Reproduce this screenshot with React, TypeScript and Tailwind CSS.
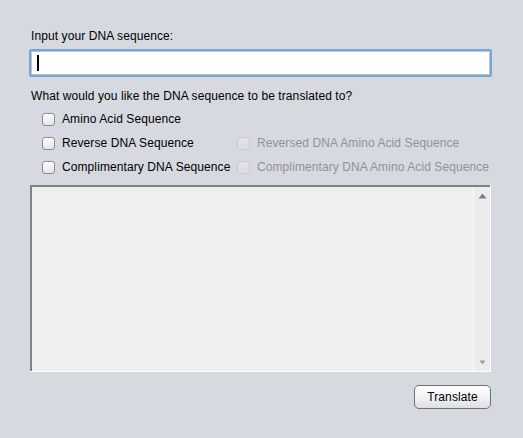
function Box({ disabled }: { disabled?: boolean }) {
  return (
    <span
      className={[
        "inline-block h-[13px] w-[13px] shrink-0 rounded-[3px] border",
        disabled
          ? "border-[#c9cbd0] bg-[linear-gradient(180deg,#e2e4e8_0%,#d9dce1_100%)]"
          : "border-[#8a8d93] bg-[linear-gradient(180deg,#fbfbfc_0%,#e4e6ea_100%)] shadow-[inset_0_1px_0_#ffffff]",
      ].join(" ")}
    />
  );
}

function Check({ label, disabled, className }: { label: string; disabled?: boolean; className?: string }) {
  return (
    <label className={["flex h-[24px] items-center gap-[7px]", className ?? ""].join(" ")}>
      <Box disabled={disabled} />
      <span className={disabled ? "text-[#8f939a]" : "text-black"}>{label}</span>
    </label>
  );
}

export default function App() {
  return (
    <div className="h-[438px] w-[523px] overflow-hidden bg-[#d6d9df] pl-[30px] pr-[32px] pt-[29px] font-['Liberation_Sans',Arial,sans-serif] text-[12px] leading-[15px] tracking-[0.09px] text-black">
      <p className="pl-[1px]">Input your DNA sequence:</p>

      {/* focused text field */}
      <div className="mx-[-1px] mt-[5px] h-[28px] rounded-[2px] border-2 border-[#76a6d6] bg-white">
        <div className="flex h-full items-center border border-[#b9c4d2] pl-[5px]">
          <span className="h-[16px] w-[1.5px] bg-black" />
        </div>
      </div>

      <p className="mt-[12px] pl-[1px]">What would you like the DNA sequence to be translated to?</p>

      <div className="mt-[3px] pl-[12px]">
        <Check label="Amino Acid Sequence" />
        <div className="flex">
          <Check label="Reverse DNA Sequence" className="w-[195px]" />
          <Check label="Reversed DNA Amino Acid Sequence" disabled />
        </div>
        <div className="flex">
          <Check label="Complimentary DNA Sequence" className="w-[195px]" />
          <Check label="Complimentary DNA Amino Acid Sequence" disabled />
        </div>
      </div>

      {/* output area with scrollbar */}
      <div className="mt-[6px] flex h-[187px] border-b border-r border-b-white border-r-white">
        <div className="flex flex-1 border-l-2 border-t-2 border-l-[#808285] border-t-[#808285] bg-[#efefef]">
          <div className="flex-1" />
          <div className="flex w-[17px] flex-col items-center justify-between border-l border-[#fafafa] bg-[#ececec] py-[6px]">
            <svg width="9" height="6" viewBox="0 0 9 6">
              <path d="M4.5 0.5 L8.5 5.5 L0.5 5.5 Z" fill="#7b7d80" />
            </svg>
            <svg width="7" height="5" viewBox="0 0 7 5">
              <path d="M0.5 0.5 L6.5 0.5 L3.5 4.5 Z" fill="#9a9ca0" />
            </svg>
          </div>
        </div>
      </div>

      <div className="mt-[13px] flex justify-end">
        <button
          type="button"
          className="h-[24px] w-[77px] rounded-[5px] border border-[#6e7178] bg-[linear-gradient(180deg,#ffffff_0%,#f3f4f6_45%,#dcdfe4_100%)] text-[12px] text-black shadow-[inset_0_1px_0_#ffffff]"
        >
          Translate
        </button>
      </div>
    </div>
  );
}
